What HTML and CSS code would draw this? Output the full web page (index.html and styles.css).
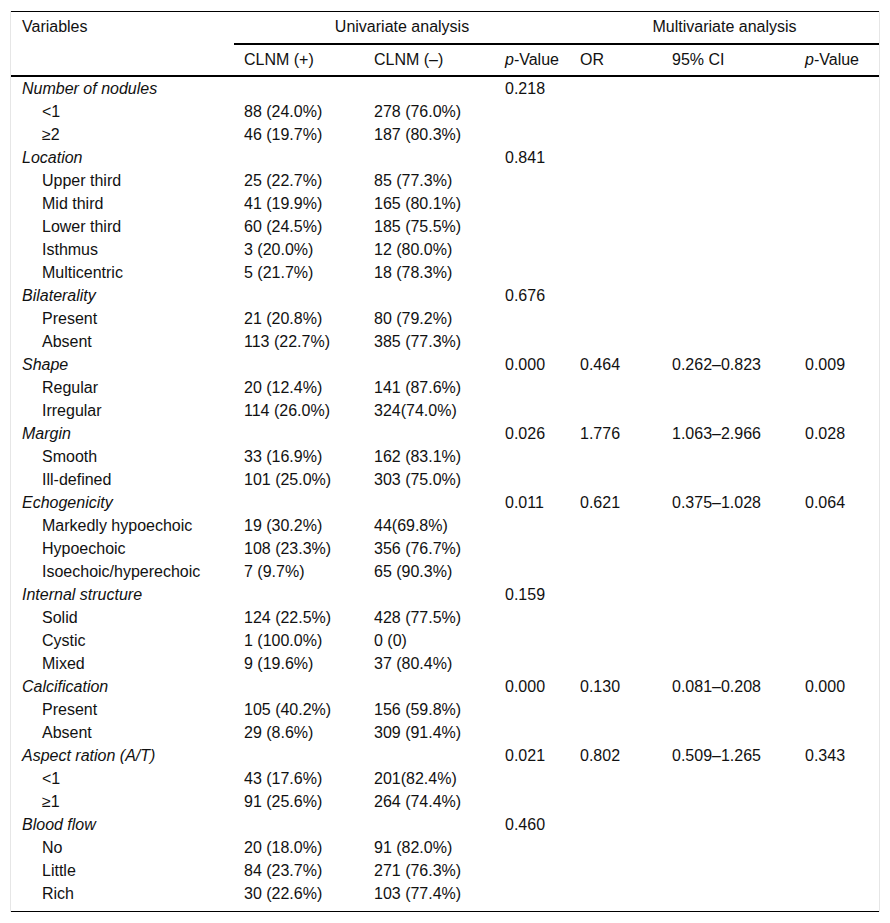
FILE: index.html
```html
<!DOCTYPE html>
<html lang="en">
<head>
<meta charset="utf-8">
<title>Table</title>
<link rel="stylesheet" href="styles.css">
</head>
<body>
<div class="frame">
<table class="data">
<colgroup>
<col class="c1"><col class="c2"><col class="c3"><col class="c4"><col class="c5"><col class="c6"><col class="c7">
</colgroup>
<thead>
<tr class="h1">
<th class="first">Variables</th>
<th class="group" colspan="3">Univariate analysis</th>
<th class="group" colspan="3">Multivariate analysis</th>
</tr>
<tr class="h2">
<th class="first"></th>
<th>CLNM (+)</th>
<th>CLNM (–)</th>
<th><i>p</i>-Value</th>
<th>OR</th>
<th>95% CI</th>
<th><i>p</i>-Value</th>
</tr>
</thead>
<tbody>
<tr class="cat"><td class="first">Number of nodules</td><td></td><td></td><td>0.218</td><td></td><td></td><td></td></tr>
<tr><td class="first sub">&lt;1</td><td>88 (24.0%)</td><td>278 (76.0%)</td><td></td><td></td><td></td><td></td></tr>
<tr><td class="first sub">≥2</td><td>46 (19.7%)</td><td>187 (80.3%)</td><td></td><td></td><td></td><td></td></tr>
<tr class="cat"><td class="first">Location</td><td></td><td></td><td>0.841</td><td></td><td></td><td></td></tr>
<tr><td class="first sub">Upper third</td><td>25 (22.7%)</td><td>85 (77.3%)</td><td></td><td></td><td></td><td></td></tr>
<tr><td class="first sub">Mid third</td><td>41 (19.9%)</td><td>165 (80.1%)</td><td></td><td></td><td></td><td></td></tr>
<tr><td class="first sub">Lower third</td><td>60 (24.5%)</td><td>185 (75.5%)</td><td></td><td></td><td></td><td></td></tr>
<tr><td class="first sub">Isthmus</td><td>3 (20.0%)</td><td>12 (80.0%)</td><td></td><td></td><td></td><td></td></tr>
<tr><td class="first sub">Multicentric</td><td>5 (21.7%)</td><td>18 (78.3%)</td><td></td><td></td><td></td><td></td></tr>
<tr class="cat"><td class="first">Bilaterality</td><td></td><td></td><td>0.676</td><td></td><td></td><td></td></tr>
<tr><td class="first sub">Present</td><td>21 (20.8%)</td><td>80 (79.2%)</td><td></td><td></td><td></td><td></td></tr>
<tr><td class="first sub">Absent</td><td>113 (22.7%)</td><td>385 (77.3%)</td><td></td><td></td><td></td><td></td></tr>
<tr class="cat"><td class="first">Shape</td><td></td><td></td><td>0.000</td><td>0.464</td><td>0.262–0.823</td><td>0.009</td></tr>
<tr><td class="first sub">Regular</td><td>20 (12.4%)</td><td>141 (87.6%)</td><td></td><td></td><td></td><td></td></tr>
<tr><td class="first sub">Irregular</td><td>114 (26.0%)</td><td>324(74.0%)</td><td></td><td></td><td></td><td></td></tr>
<tr class="cat"><td class="first">Margin</td><td></td><td></td><td>0.026</td><td>1.776</td><td>1.063–2.966</td><td>0.028</td></tr>
<tr><td class="first sub">Smooth</td><td>33 (16.9%)</td><td>162 (83.1%)</td><td></td><td></td><td></td><td></td></tr>
<tr><td class="first sub">Ill-defined</td><td>101 (25.0%)</td><td>303 (75.0%)</td><td></td><td></td><td></td><td></td></tr>
<tr class="cat"><td class="first">Echogenicity</td><td></td><td></td><td>0.011</td><td>0.621</td><td>0.375–1.028</td><td>0.064</td></tr>
<tr><td class="first sub">Markedly hypoechoic</td><td>19 (30.2%)</td><td>44(69.8%)</td><td></td><td></td><td></td><td></td></tr>
<tr><td class="first sub">Hypoechoic</td><td>108 (23.3%)</td><td>356 (76.7%)</td><td></td><td></td><td></td><td></td></tr>
<tr><td class="first sub">Isoechoic/hyperechoic</td><td>7 (9.7%)</td><td>65 (90.3%)</td><td></td><td></td><td></td><td></td></tr>
<tr class="cat"><td class="first">Internal structure</td><td></td><td></td><td>0.159</td><td></td><td></td><td></td></tr>
<tr><td class="first sub">Solid</td><td>124 (22.5%)</td><td>428 (77.5%)</td><td></td><td></td><td></td><td></td></tr>
<tr><td class="first sub">Cystic</td><td>1 (100.0%)</td><td>0 (0)</td><td></td><td></td><td></td><td></td></tr>
<tr><td class="first sub">Mixed</td><td>9 (19.6%)</td><td>37 (80.4%)</td><td></td><td></td><td></td><td></td></tr>
<tr class="cat"><td class="first">Calcification</td><td></td><td></td><td>0.000</td><td>0.130</td><td>0.081–0.208</td><td>0.000</td></tr>
<tr><td class="first sub">Present</td><td>105 (40.2%)</td><td>156 (59.8%)</td><td></td><td></td><td></td><td></td></tr>
<tr><td class="first sub">Absent</td><td>29 (8.6%)</td><td>309 (91.4%)</td><td></td><td></td><td></td><td></td></tr>
<tr class="cat"><td class="first">Aspect ration (A/T)</td><td></td><td></td><td>0.021</td><td>0.802</td><td>0.509–1.265</td><td>0.343</td></tr>
<tr><td class="first sub">&lt;1</td><td>43 (17.6%)</td><td>201(82.4%)</td><td></td><td></td><td></td><td></td></tr>
<tr><td class="first sub">≥1</td><td>91 (25.6%)</td><td>264 (74.4%)</td><td></td><td></td><td></td><td></td></tr>
<tr class="cat"><td class="first">Blood flow</td><td></td><td></td><td>0.460</td><td></td><td></td><td></td></tr>
<tr><td class="first sub">No</td><td>20 (18.0%)</td><td>91 (82.0%)</td><td></td><td></td><td></td><td></td></tr>
<tr><td class="first sub">Little</td><td>84 (23.7%)</td><td>271 (76.3%)</td><td></td><td></td><td></td><td></td></tr>
<tr class="last"><td class="first sub">Rich</td><td>30 (22.6%)</td><td>103 (77.4%)</td><td></td><td></td><td></td><td></td></tr>
</tbody>
</table>
</div>
</body>
</html>
```

FILE: styles.css
```css
html, body {
  margin: 0;
  padding: 0;
  background: #fff;
}

body {
  font-family: "Liberation Sans", Arial, sans-serif;
  font-size: 16px;
  color: #111;
}

.frame {
  margin: 11px 10px 0 10px;
  border-left: 1px solid #e6e6e6;
  border-right: 1px solid #e6e6e6;
}

.data {
  width: 100%;
  table-layout: fixed;
  border-collapse: separate;
  border-spacing: 0;
  border-top: 1px solid #000;
  border-bottom: 1px solid #000;
}

.c1 { width: 223px; }
.c2 { width: 130px; }
.c3 { width: 131px; }
.c4 { width: 75px; }
.c5 { width: 92px; }
.c6 { width: 133px; }
.c7 { width: 84px; }

.data th,
.data td {
  padding: 0 10px;
  text-align: left;
  font-weight: normal;
  white-space: nowrap;
  vertical-align: top;
}

.data th.first,
.data td.first {
  padding-left: 11px;
}

.h1 th {
  line-height: 30px;
  padding-bottom: 1px;
}

.h1 th.group {
  text-align: center;
  border-bottom: 2px solid #000;
}

.h1 th.first {
  border-bottom: 2px solid transparent;
}

.h2 th {
  line-height: 30px;
  border-bottom: 2px solid #000;
}

.data td {
  line-height: 23px;
  height: 23px;
}

.cat td.first {
  font-style: italic;
}

.data td.sub {
  padding-left: 31px;
}

.last td {
  padding-bottom: 6px;
}
```
